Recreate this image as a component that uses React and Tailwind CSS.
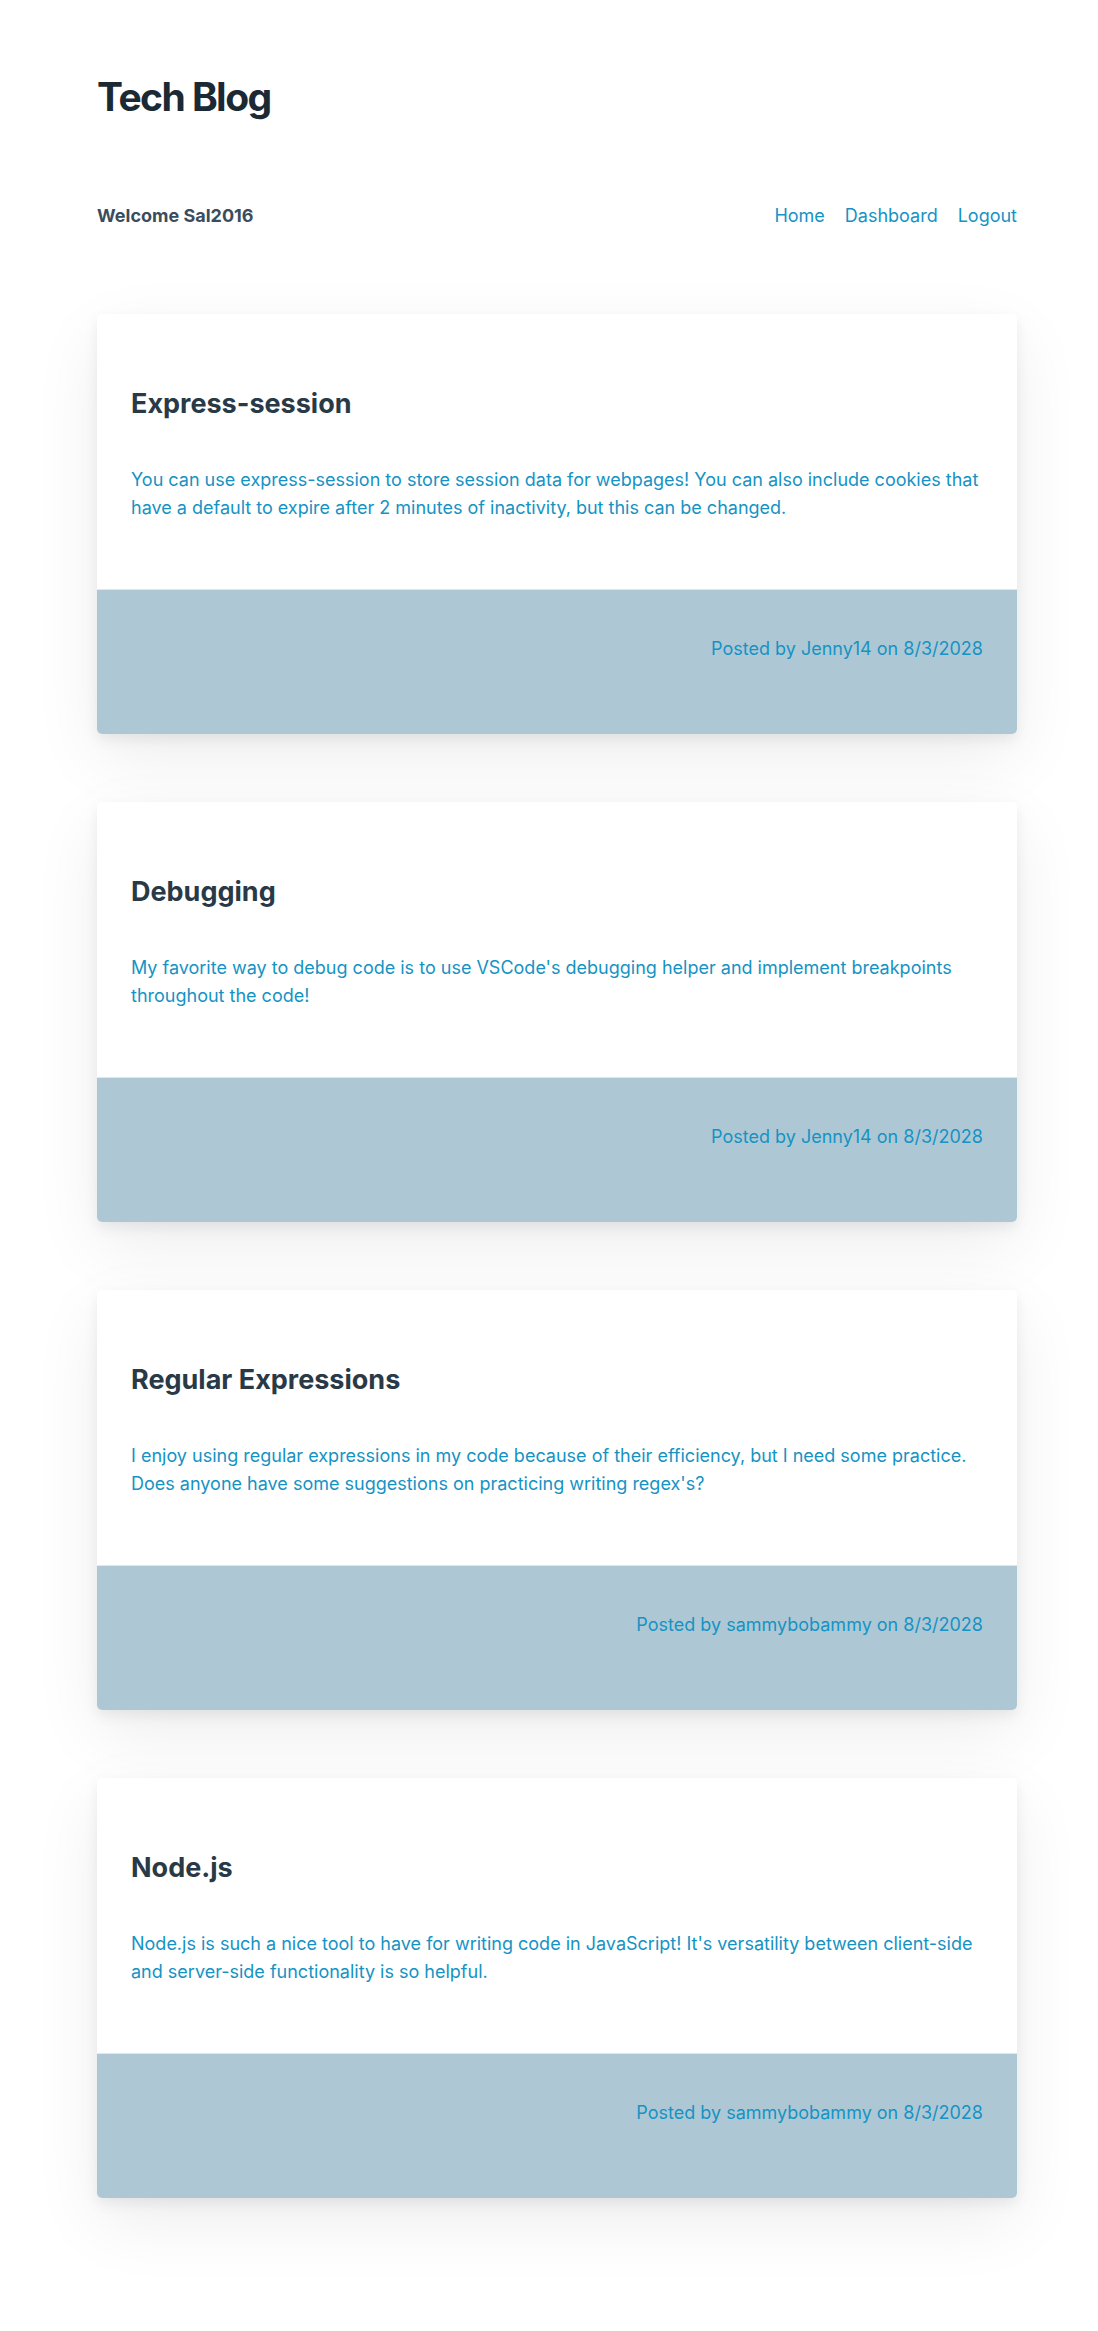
import React from 'react';

const posts = [
  {
    title: 'Express-session',
    body: 'You can use express-session to store session data for webpages! You can also include cookies that have a default to expire after 2 minutes of inactivity, but this can be changed.',
    author: 'Jenny14',
    date: '8/3/2028',
  },
  {
    title: 'Debugging',
    body: "My favorite way to debug code is to use VSCode's debugging helper and implement breakpoints throughout the code!",
    author: 'Jenny14',
    date: '8/3/2028',
  },
  {
    title: 'Regular Expressions',
    body: "I enjoy using regular expressions in my code because of their efficiency, but I need some practice. Does anyone have some suggestions on practicing writing regex's?",
    author: 'sammybobammy',
    date: '8/3/2028',
  },
  {
    title: 'Node.js',
    body: "Node.js is such a nice tool to have for writing code in JavaScript! It's versatility between client-side and server-side functionality is so helpful.",
    author: 'sammybobammy',
    date: '8/3/2028',
  },
];

const PostCard = ({ post }) => {
  return (
    <article className="h-[420px] flex flex-col bg-white rounded-[5px] overflow-hidden shadow-[0_6px_14px_rgba(0,0,0,0.07),0_24px_70px_rgba(0,0,0,0.07)]">
      <div className="flex-1 px-[34px] pt-[72px]">
        <h2 className="text-[27px] leading-[35px] font-bold text-[#2a3946]">{post.title}</h2>
        <p className="mt-[45px] text-[18px] leading-[28px] text-[#1593c4]">{post.body}</p>
      </div>
      <div className="h-[145px] bg-[#adc8d4] border-t border-[#dfe8ec] px-[34px] pt-[45px] text-right">
        <p className="text-[18px] leading-[28px] text-[#1593c4]">
          Posted by {post.author} on {post.date}
        </p>
      </div>
    </article>
  );
};

const App = () => {
  return (
    <div className="min-h-[2331px] bg-white font-['Inter','Liberation_Sans',sans-serif] pl-[97px] pr-[81px] pt-[73px] pb-[133px]">
      {/* Header */}
      <header>
        <h1 className="text-[39px] leading-[48px] font-bold tracking-[-0.04em] text-[#1b2935]">Tech Blog</h1>
        <nav className="mt-[81px] flex items-center justify-between">
          <span className="text-[18px] leading-[28px] font-bold text-[#3b4d5c]">Welcome Sal2016</span>
          <div className="flex gap-[20px] text-[18px] leading-[28px] text-[#1593c4]">
            <a href="#">Home</a>
            <a href="#">Dashboard</a>
            <a href="#">Logout</a>
          </div>
        </nav>
      </header>

      {/* Posts */}
      <main className="mt-[84px] flex flex-col gap-[68px]">
        {posts.map((post, index) => (
          <PostCard key={index} post={post} />
        ))}
      </main>
    </div>
  );
};

export default App;
